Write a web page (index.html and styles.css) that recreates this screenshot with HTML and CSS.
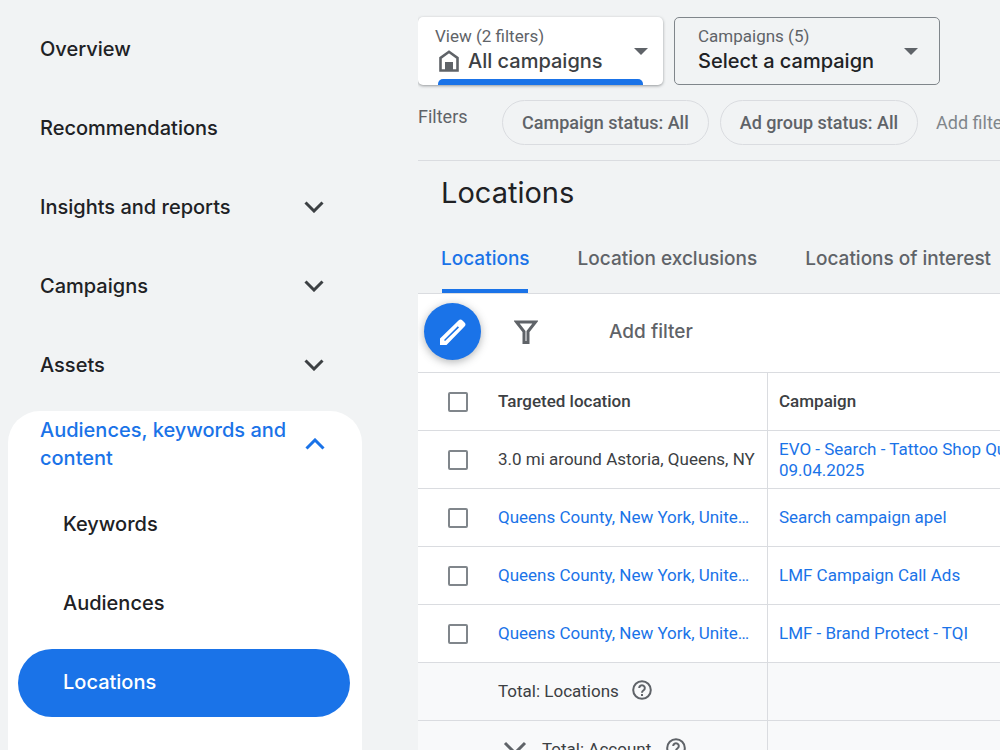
FILE: index.html
```html
<!DOCTYPE html>
<html lang="en">

<head>
    <meta charset="UTF-8">
    <meta name="viewport" content="width=device-width, initial-scale=1.0">
    <title>Locations</title>
    <link rel="stylesheet" href="styles.css">
</head>

<body>
    <div class="app">
        <nav class="sidebar">
            <a class="nav-item" href="#">Overview</a>
            <a class="nav-item" href="#">Recommendations</a>
            <button class="nav-item" aria-expanded="false">Insights and reports
                <svg class="chevron" viewBox="0 0 20 12"><path d="M1.5 1.5l8.5 8.5 8.5-8.5" /></svg>
            </button>
            <button class="nav-item" aria-expanded="false">Campaigns
                <svg class="chevron" viewBox="0 0 20 12"><path d="M1.5 1.5l8.5 8.5 8.5-8.5" /></svg>
            </button>
            <button class="nav-item" aria-expanded="false">Assets
                <svg class="chevron" viewBox="0 0 20 12"><path d="M1.5 1.5l8.5 8.5 8.5-8.5" /></svg>
            </button>
            <div class="nav-group">
                <button class="group-title" aria-expanded="true">
                    <span>Audiences, keywords and content</span>
                    <svg class="chevron" viewBox="0 0 20 12"><path d="M1.5 10.5l8.5-8.5 8.5 8.5" /></svg>
                </button>
                <a class="sub-item" href="#">Keywords</a>
                <a class="sub-item" href="#">Audiences</a>
                <a class="sub-item active" href="#">Locations</a>
            </div>
        </nav>

        <main class="main">
            <div class="pickers">
                <div class="picker view">
                    <div class="picker-body">
                        <label for="view">View (2 filters)</label>
                        <div class="picker-value">
                            <svg class="home" viewBox="0 0 20 22"><path d="M1.5 20.5V8L10 1.8 18.500 8v12.500z" fill="none" stroke="#5f6368" stroke-width="2.600" /><path d="M6 12h8v9H6z" fill="#5f6368" /></svg>
                            <select id="view">
                                <option>All campaigns</option>
                            </select>
                        </div>
                    </div>
                    <svg class="caret" viewBox="0 0 14 7"><path d="M0 0h14L7 7z" /></svg>
                </div>
                <div class="picker campaign">
                    <div class="picker-body">
                        <label for="campaign">Campaigns (5)</label>
                        <div class="picker-value">
                            <select id="campaign">
                                <option>Select a campaign</option>
                            </select>
                        </div>
                    </div>
                    <svg class="caret" viewBox="0 0 14 7"><path d="M0 0h14L7 7z" /></svg>
                </div>
            </div>

            <div class="filters">
                <span class="filters-label">Filters</span>
                <button class="chip">Campaign status: All</button>
                <button class="chip">Ad group status: All</button>
                <button class="add">Add filter</button>
            </div>

            <h1>Locations</h1>

            <div class="tabs">
                <a class="tab active" href="#">Locations</a>
                <a class="tab" href="#">Location exclusions</a>
                <a class="tab" href="#">Locations of interest</a>
            </div>

            <div class="toolbar">
                <button class="edit" aria-label="Edit">
                    <svg viewBox="0 0 28 28"><path fill-rule="evenodd" d="M1 27V20.500L19.500 2.500Q21.500.5 23.500 2.500L25.500 4.500Q27.500 6.500 25.500 8.500L7.500 27zM5 22L6 23 20 9.500 18.800 8.300z" /></svg>
                </button>
                <button class="funnel" aria-label="Filter">
                    <svg viewBox="0 0 24 24"><path d="M2.500 2h19L14 11.500V22.500h-4V11.500z" /></svg>
                </button>
                <button class="toolbar-add">Add filter</button>
            </div>

            <table>
                <thead>
                    <tr>
                        <th class="check"><input type="checkbox" aria-label="Select all"></th>
                        <th class="location">Targeted location</th>
                        <th>Campaign</th>
                    </tr>
                </thead>
                <tbody>
                    <tr>
                        <td class="check"><input type="checkbox" aria-label="Select row"></td>
                        <td class="location">3.0 mi around Astoria, Queens, NY</td>
                        <td><a href="#">EVO - Search - Tattoo Shop Queens<br>09.04.2025</a></td>
                    </tr>
                    <tr>
                        <td class="check"><input type="checkbox" aria-label="Select row"></td>
                        <td class="location"><a href="#">Queens County, New York, Unite…</a></td>
                        <td><a href="#">Search campaign apel</a></td>
                    </tr>
                    <tr>
                        <td class="check"><input type="checkbox" aria-label="Select row"></td>
                        <td class="location"><a href="#">Queens County, New York, Unite…</a></td>
                        <td><a href="#">LMF Campaign Call Ads</a></td>
                    </tr>
                    <tr>
                        <td class="check"><input type="checkbox" aria-label="Select row"></td>
                        <td class="location"><a href="#">Queens County, New York, Unite…</a></td>
                        <td><a href="#">LMF - Brand Protect - TQI</a></td>
                    </tr>
                </tbody>
                <tfoot>
                    <tr>
                        <td class="check"></td>
                        <td class="location">
                            <div class="total">Total: Locations
                                <svg class="help" viewBox="0 0 20 20"><circle cx="10" cy="10" r="8.800" /><path d="M7.200 8a2.800 2.800 0 1 1 4.400 2.300c-1 .7-1.600 1.200-1.600 2.400M10 14v2" /></svg>
                            </div>
                        </td>
                        <td></td>
                    </tr>
                    <tr>
                        <td class="check"></td>
                        <td class="location">
                            <div class="total account">
                                <svg class="expand" viewBox="0 0 24 14"><path d="M2 2l10 10L22 2" /></svg>
                                Total: Account
                                <svg class="help" viewBox="0 0 20 20"><circle cx="10" cy="10" r="8.800" /><path d="M7.200 8a2.800 2.800 0 1 1 4.400 2.300c-1 .7-1.600 1.200-1.600 2.400M10 14v2" /></svg>
                            </div>
                        </td>
                        <td></td>
                    </tr>
                </tfoot>
            </table>
        </main>
    </div>
</body>

</html>
```
FILE: styles.css
```css
html,
body {
    height: 100%;
    margin: 0;
    overflow: hidden;
}

* {
    box-sizing: border-box;
}

body {
    background: #f1f3f4;
    color: #3c4043;
    font-family: Roboto, sans-serif;
    font-size: 17px;
}

a {
    color: #1a73e8;
    text-decoration: none;
}

button,
select {
    border: 0;
    padding: 0;
    background: none;
    color: inherit;
    font: inherit;
    text-align: left;
    cursor: pointer;
}

.app {
    display: flex;
    height: 100%;
    overflow: hidden;
}

/* sidebar */

.sidebar {
    flex: 0 0 418px;
    padding: 9px 56px 0 8px;
    font-family: Inter, sans-serif;
    font-size: 20px;
    font-weight: 500;
}

.nav-item {
    display: flex;
    align-items: center;
    justify-content: space-between;
    width: 100%;
    height: 79px;
    padding: 0 38px 0 32px;
    color: #202124;
}

.chevron {
    flex: none;
    width: 20px;
    height: 12px;
    fill: none;
    stroke: #3c4043;
    stroke-width: 3;
}

.nav-group {
    height: 400px;
    margin-top: 7px;
    padding: 5px 12px 0 10px;
    border-radius: 32px;
    background: #fff;
}

.group-title {
    display: flex;
    align-items: center;
    justify-content: space-between;
    width: 100%;
    margin-bottom: 19px;
    padding: 0 25px 0 22px;
    color: #1a73e8;
    line-height: 28px;
}

.group-title span {
    width: 260px;
}

.group-title .chevron {
    stroke: #1a73e8;
}

.sub-item {
    display: flex;
    align-items: center;
    height: 68px;
    margin-bottom: 11px;
    padding: 0 0 3px 45px;
    border-radius: 34px;
    color: #202124;
}

.sub-item.active {
    background: #1a73e8;
    color: #fff;
}

/* main */

.main {
    flex: 1;
    min-width: 0;
    overflow: hidden;
}

.pickers {
    display: flex;
    gap: 11px;
    padding-top: 17px;
}

.picker {
    display: flex;
    align-items: center;
    height: 68px;
    border-radius: 5px;
}

.picker-body {
    flex: 1;
    padding-bottom: 4px;
}

.picker label {
    display: block;
    color: #5f6368;
    font-size: 17px;
    line-height: 24px;
}

.picker-value {
    display: flex;
    align-items: center;
    gap: 9px;
    line-height: 26px;
}

.picker select {
    appearance: none;
    width: 100%;
    font-family: Inter, sans-serif;
    font-size: 20px;
    font-weight: 500;
}

.view {
    position: relative;
    width: 245px;
    padding: 0 15px 0 17px;
    background: #fff;
    box-shadow: 0 1px 3px rgba(60, 64, 67, .5);
}

.view::after {
    content: "";
    position: absolute;
    right: 20px;
    bottom: 0;
    left: 20px;
    height: 6px;
    border-radius: 5px 5px 0 0;
    background: #1a73e8;
}

.campaign {
    width: 266px;
    padding: 0 21px 0 23px;
    border: 1px solid #80868b;
    color: #202124;
}

.home {
    flex: none;
    width: 20px;
    height: 22px;
    margin-left: 4px;
}

.caret {
    flex: none;
    width: 14px;
    height: 7px;
    fill: #5f6368;
}

.filters {
    display: flex;
    align-items: center;
    height: 76px;
    border-bottom: 1px solid #dadce0;
    color: #5f6368;
    font-size: 18px;
    white-space: nowrap;
}

.filters-label {
    flex: 0 0 84px;
    padding-bottom: 12px;
}

.chip {
    flex: none;
    height: 45px;
    margin-right: 11px;
    padding: 0 19px;
    border: 1px solid #dadce0;
    border-radius: 23px;
    font-weight: 500;
}

.add {
    padding-left: 7px;
    color: #80868b;
}

h1 {
    margin: 0;
    padding: 11px 23px 0;
    color: #202124;
    font-family: Inter, sans-serif;
    font-size: 29px;
    font-weight: 400;
    line-height: 42px;
}

.tabs {
    display: flex;
    gap: 48px;
    height: 80px;
    padding: 0 23px;
    border-bottom: 1px solid #dadce0;
    font-family: Inter, sans-serif;
    font-size: 19px;
    font-weight: 500;
    line-height: 89px;
    white-space: nowrap;
}

.tab {
    color: #5f6368;
}

.tab.active {
    background: linear-gradient(#1a73e8, #1a73e8) center bottom / 86px 4px no-repeat;
    color: #1a73e8;
}

.toolbar {
    display: flex;
    align-items: center;
    height: 78px;
    padding: 0 6px 3px;
    background: #fff;
}

.edit {
    display: flex;
    align-items: center;
    justify-content: center;
    width: 57px;
    height: 57px;
    border-radius: 50%;
    background: #1a73e8;
    box-shadow: 0 2px 8px rgba(60, 64, 67, .4);
}

.edit svg {
    width: 28px;
    height: 28px;
    fill: #fff;
}

.funnel {
    margin: 0 71px 0 33px;
    height: 24px;
}

.funnel svg {
    width: 24px;
    height: 24px;
    fill: none;
    stroke: #5f6368;
    stroke-width: 3;
}

.toolbar-add {
    color: #5f6368;
    font-family: Inter, sans-serif;
    font-size: 19px;
    font-weight: 500;
}

/* table */

table {
    width: 100%;
    border-collapse: separate;
    border-spacing: 0;
    table-layout: fixed;
    background: #fff;
    line-height: 21px;
    white-space: nowrap;
}

th,
td {
    height: 58px;
    padding: 0 0 0 11px;
    border-top: 1px solid #dadce0;
    text-align: left;
}

th {
    font-weight: 500;
}

.check {
    width: 80px;
    padding-left: 30px;
}

.location {
    width: 270px;
    padding-left: 0;
    border-right: 1px solid #dadce0;
}

input[type="checkbox"] {
    appearance: none;
    display: block;
    width: 20px;
    height: 20px;
    margin: 0;
    border: 2px solid #80868b;
    border-radius: 2px;
    background: #fff;
}

tfoot {
    background: #f8f9fa;
}

.total {
    display: flex;
    align-items: center;
    gap: 13px;
}

.account {
    gap: 15px;
    padding-left: 5px;
}

.help {
    width: 20px;
    height: 20px;
    margin-bottom: 4px;
    fill: none;
    stroke: #5f6368;
    stroke-width: 2;
}

.expand {
    width: 24px;
    height: 14px;
    margin-bottom: 4px;
    fill: none;
    stroke: #5f6368;
    stroke-width: 3;
}
```
